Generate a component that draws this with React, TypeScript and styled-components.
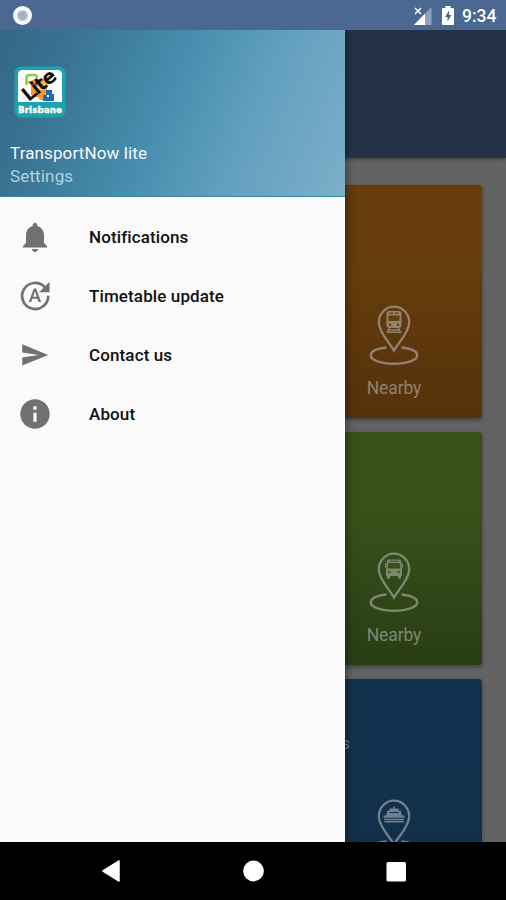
import React from "react";
import styled, { createGlobalStyle } from "styled-components";

const GlobalStyle = createGlobalStyle`
  * { box-sizing: border-box; }
  body { margin: 0; background: #000; font-family: Roboto, "Liberation Sans", sans-serif; }
`;

const Screen = styled.div`
  width: 506px;
  height: 900px;
  display: flex;
  flex-direction: column;
  overflow: hidden;
  background: #000;
`;

const StatusBar = styled.header`
  flex: 0 0 30px;
  height: 30px;
  display: flex;
  align-items: center;
  padding: 0 10px 0 13px;
  background: #4b6892;
  color: #fff;
`;

const SyncDot = styled.div`
  width: 19px;
  height: 19px;
  border-radius: 50%;
  border: 4px solid #fbfcff;
  background: radial-gradient(#a3afca 35%, #cdd5e5 90%);
  margin-right: auto;
`;

const SignalIcon = styled.svg`
  margin: 1px 10px 0 0;
`;

const BatteryIcon = styled.svg`
  margin-right: 8px;
`;

const Clock = styled.span`
  width: 34px;
  font-size: 17.5px;
  font-weight: 500;
  line-height: 28px;
  padding-top: 1px;
  white-space: nowrap;
`;

const Stage = styled.main`
  flex: 0 0 812px;
  position: relative;
  overflow: hidden;
  background: #636363;
`;

const Toolbar = styled.div`
  height: 128px;
  background: #253349;
  box-shadow: 0 1px 4px rgba(0, 0, 0, 0.4);
`;

const CardList = styled.div`
  display: flex;
  flex-direction: column;
  gap: 14px;
  padding: 27px 24px 0;
`;

const Card = styled.section<{ $from: string; $to: string }>`
  height: 233px;
  display: flex;
  justify-content: flex-end;
  border-radius: 3px;
  background: linear-gradient(${(p) => p.$from} 35%, ${(p) => p.$to});
  box-shadow: 0 2px 4px rgba(0, 0, 0, 0.35);
`;

const CardTitle = styled.div`
  margin: 54px 0 0 0;
  font-size: 17px;
  line-height: 20px;
  color: #71808c;
`;

const Nearby = styled.div`
  width: 88px;
  display: flex;
  flex-direction: column;
  align-items: center;
  padding: 120px 0 0;
  margin-right: 44px;
`;

const PinIcon = styled.svg`
  display: block;
  fill: none;
`;

const NearbyLabel = styled.span<{ $color: string }>`
  margin-top: 11px;
  font-size: 17.5px;
  line-height: 22px;
  letter-spacing: -0.1px;
  color: ${(p) => p.$color};
`;

const Drawer = styled.aside`
  position: absolute;
  top: 0;
  left: 0;
  width: 345px;
  height: 812px;
  background: #fafafa;
  box-shadow: 0 0 10px rgba(0, 0, 0, 0.55);
`;

const DrawerHeader = styled.div`
  height: 167px;
  display: flex;
  flex-direction: column;
  align-items: flex-start;
  padding: 36px 10px 0;
  background: linear-gradient(113deg, #346786 0%, #397392 18%, #478eae 47%, #62a0bf 70%, #7dafc8 100%);
  border-bottom: 1px solid #3c86a8;
`;

const AppLogo = styled.svg`
  display: block;
  margin-left: 4px;
`;

const AppName = styled.div`
  margin-top: 24px;
  font-size: 17px;
  line-height: 23px;
  letter-spacing: 0.12px;
  color: #f5fafc;
`;

const Subtitle = styled.div`
  font-size: 17px;
  line-height: 23px;
  letter-spacing: 0.15px;
  color: #b5d1de;
`;

const Menu = styled.nav`
  display: flex;
  flex-direction: column;
  padding-top: 10px;
`;

const MenuItem = styled.div`
  height: 59px;
  display: flex;
  align-items: center;
  padding-left: 17px;
  color: #111;
`;

const MenuIcon = styled.svg`
  width: 36px;
  height: 36px;
  margin-right: 36px;
  fill: #717171;
`;

const MenuLabel = styled.span`
  font-size: 17px;
  font-weight: 500;
  letter-spacing: 0.12px;
`;

const NavBar = styled.footer`
  flex: 0 0 58px;
  display: flex;
  align-items: center;
  justify-content: space-between;
  padding: 0 99px 0 101px;
  background: #000;
`;

type Vehicle = "train" | "bus" | "ferry";

const Glyph = ({ kind, color, hole }: { kind: Vehicle; color: string; hole: string }) => {
  if (kind === "train")
    return (
      <g>
        <path d="M19.500 6h11a2 2 0 0 1 2 2V20a3 3 0 0 1-3 3h-9a3 3 0 0 1-3-3V8a2 2 0 0 1 2-2z" fill={color} />
        <path d="M19.500 10.500h11v5.500h-11zM20.500 7.500h3.500v1.300h-3.500zM26 7.500h3.500v1.300H26z" fill={hole} />
        <circle cx="21" cy="19.800" r="1.200" fill={hole} />
        <circle cx="29" cy="19.800" r="1.200" fill={hole} />
        <path d="M20.500 23l-2.500 5M29.500 23l2.500 5M19.500 25h11M18.500 27.300h13" stroke={color} strokeWidth="1.500" />
      </g>
    );
  if (kind === "bus")
    return (
      <g>
        <path d="M19.500 7.500h11q1.500 0 1.800 2l.7 7.500v7h-1v2.500h-3V24h-8v2.500h-3V24h-1v-7l.7-7.500q.3-2 1.800-2z" fill={color} />
        <path d="M19.300 11h11.400l.6 5.500H18.700zM20.500 8.800h9v.9h-9z" fill={hole} />
        <path d="M16.500 11.500v4M33.500 11.500v4" stroke={color} strokeWidth="1.200" />
        <circle cx="20.300" cy="20" r="1.200" fill={hole} />
        <circle cx="29.700" cy="20" r="1.200" fill={hole} />
      </g>
    );
  return (
    <g fill={color}>
      <path d="M24.200 7.500h1.600v2h3.700v2h2l1.500 5h2.500v2.300H14.500v-2.300H17l1.500-5h2v-2h3.700z" />
      <path d="M15 19.800h20v1.400H15zM15.500 22h19v1.500h-19z" />
      <path d="M20.500 13h9v1h-9z" fill={hole} />
    </g>
  );
};

const MapPin = ({ kind, color, hole }: { kind: Vehicle; color: string; hole: string }) => (
  <PinIcon width="50" height="61" viewBox="0 0 50 61">
    <path
      d="M25 45.500C21.500 39 9.800 27.500 9.800 17.500a15.200 15.800 0 0 1 30.400 0C40.200 27.500 28.500 39 25 45.500z"
      stroke={color}
      strokeWidth="2.300"
    />
    <path
      d="M17.500 42.500C8 43.500 1.800 46.500 1.800 50.500c0 4.600 10.300 8.200 23.200 8.200s23.200-3.600 23.200-8.200c0-4-6.200-7-15.700-8"
      stroke={color}
      strokeWidth="2.500"
    />
    <Glyph kind={kind} color={color} hole={hole} />
  </PinIcon>
);

const Logo = () => (
  <AppLogo width="52" height="52" viewBox="0 0 52 52">
    <rect x="0.500" y="0.500" width="51" height="51" rx="7" fill="#1ba4af" />
    <path d="M4 36V9q0-5 5-5h34q5 0 5 5v27z" fill="#fff" />
    <path d="M12.500 19v-7q0-3 3-3h5q2.500 0 2.500 3" fill="none" stroke="#91ce38" strokeWidth="2.500" />
    <path d="M13 16h9" stroke="#91ce38" strokeWidth="2" />
    <path d="M17 18q0-5 5-5h7q4 0 4 5v9q0 3-3 4l-1 3h-3l-2-3h-3q-4 0-4-4z" fill="#f9982b" />
    <path d="M20 20h10v4H20z" fill="#ffdc9d" />
    <path d="M29 10q6-2 9 1l-4 8h-5z" fill="#f4ce36" />
    <path d="M29 35v-6h3v-5h6v4h2v7z" fill="#1f69b9" />
    <path d="M33 29h2v2h-2z" fill="#fff" />
    <text
      transform="translate(14.500 35.500) rotate(-39)"
      fontFamily='"DejaVu Sans", sans-serif'
      fontSize="18"
      textLength="37"
      lengthAdjust="spacingAndGlyphs"
      fill="#0b0b0b"
      stroke="#0b0b0b"
      strokeWidth="1.100"
    >
      Lite
    </text>
    <text
      x="26"
      y="47"
      textAnchor="middle"
      textLength="44"
      lengthAdjust="spacingAndGlyphs"
      fontFamily='"DejaVu Sans", sans-serif'
      fontSize="9"
      fontWeight="700"
      fill="#fff"
      stroke="#fff"
      strokeWidth="0.300"
    >
      Brisbane
    </text>
  </AppLogo>
);

const menu = [
  {
    label: "Notifications",
    icon: (
      <path d="M12 22c1.100 0 2-.9 2-2h-4c0 1.100.9 2 2 2zm6-6v-5c0-3.070-1.640-5.640-4.500-6.320V4c0-.83-.67-1.500-1.500-1.500s-1.500.67-1.500 1.500v.68C7.630 5.360 6 7.920 6 11v5l-2 2v1h16v-1l-2-2z" />
    ),
  },
  {
    label: "Timetable update",
    icon: (
      <>
        <path
          d="M18.600 6.400A8.700 8.700 0 1 0 20.800 12"
          transform="translate(0 -0.200)"
          fill="none"
          stroke="#717171"
          strokeWidth="1.800"
        />
        <path d="M21.700 2.500v7h-7z" />
        <path d="M11.200 7h1.600l3.300 9h-1.700l-.8-2.200h-3.300L9.500 16H7.900zm-.4 5.500h2.400L12 8.900z" />
      </>
    ),
  },
  { label: "Contact us", icon: <path d="M3.500 18.800L20.800 11.800 3.500 4.700v5.400L14.500 11.800 3.500 13.400z" transform="translate(0 .2)" /> },
  {
    label: "About",
    icon: (
      <path d="M12 2.200C6.600 2.200 2.200 6.600 2.200 12s4.400 9.800 9.800 9.800 9.800-4.400 9.800-9.800S17.400 2.200 12 2.200zm1.100 14.900h-2.200v-6h2.200v6zm0-8h-2.200V6.900h2.200v2.200z" />
    ),
  },
];

const cards: { kind: Vehicle; from: string; to: string; ink: string; title?: string; label?: string }[] = [
  { kind: "train", from: "#663d0b", to: "#55320b", ink: "#928172", label: "Nearby" },
  { kind: "bus", from: "#38511b", to: "#293d14", ink: "#7c8871", label: "Nearby" },
  { kind: "ferry", from: "#12334f", to: "#102c45", ink: "#71808c", title: "s" },
];

export default function App() {
  return (
    <>
      <GlobalStyle />
      <Screen>
        <StatusBar>
          <SyncDot />
          <SignalIcon width="18" height="18" viewBox="0 0 18 18">
            <path d="M0 18L17.500 0v18z" fill="#91a2bd" />
            <path d="M0 18L11 6.500V18z" fill="#fff" />
            <path d="M0 0h8v8H0z" fill="#4b6892" />
            <path d="M1 1l6 6M7 1L1 7" stroke="#fff" strokeWidth="1.500" />
          </SignalIcon>
          <BatteryIcon width="12" height="19" viewBox="0 0 12 19">
            <path d="M3.500 0h5v2H11q1 0 1 1v15q0 1-1 1H1q-1 0-1-1V3q0-1 1-1h2.500z" fill="#fff" />
            <path d="M7 4.500L3 11h2.500v4.500L9.500 9H7z" fill="#4b6892" />
          </BatteryIcon>
          <Clock>9:34</Clock>
        </StatusBar>
        <Stage>
          <Toolbar />
          <CardList>
            {cards.map((c) => (
              <Card key={c.kind} $from={c.from} $to={c.to}>
                {c.title && <CardTitle>{c.title}</CardTitle>}
                <Nearby>
                  <MapPin kind={c.kind} color={c.ink} hole={c.from} />
                  {c.label && <NearbyLabel $color={c.ink}>{c.label}</NearbyLabel>}
                </Nearby>
              </Card>
            ))}
          </CardList>
          <Drawer>
            <DrawerHeader>
              <Logo />
              <AppName>TransportNow lite</AppName>
              <Subtitle>Settings</Subtitle>
            </DrawerHeader>
            <Menu>
              {menu.map((m) => (
                <MenuItem key={m.label}>
                  <MenuIcon viewBox="0 0 24 24">{m.icon}</MenuIcon>
                  <MenuLabel>{m.label}</MenuLabel>
                </MenuItem>
              ))}
            </Menu>
          </Drawer>
        </Stage>
        <NavBar>
          <svg width="20" height="22" viewBox="0 0 20 22">
            <path d="M18 1v20L2 11z" fill="#fff" stroke="#fff" strokeWidth="1.500" strokeLinejoin="round" />
          </svg>
          <svg width="22" height="22" viewBox="0 0 22 22">
            <circle cx="10.500" cy="11" r="10.400" fill="#fff" />
          </svg>
          <svg width="21" height="21" viewBox="0 0 21 21">
            <rect x="0.500" y="1" width="19.500" height="19.500" rx="1.500" fill="#fff" />
          </svg>
        </NavBar>
      </Screen>
    </>
  );
}
